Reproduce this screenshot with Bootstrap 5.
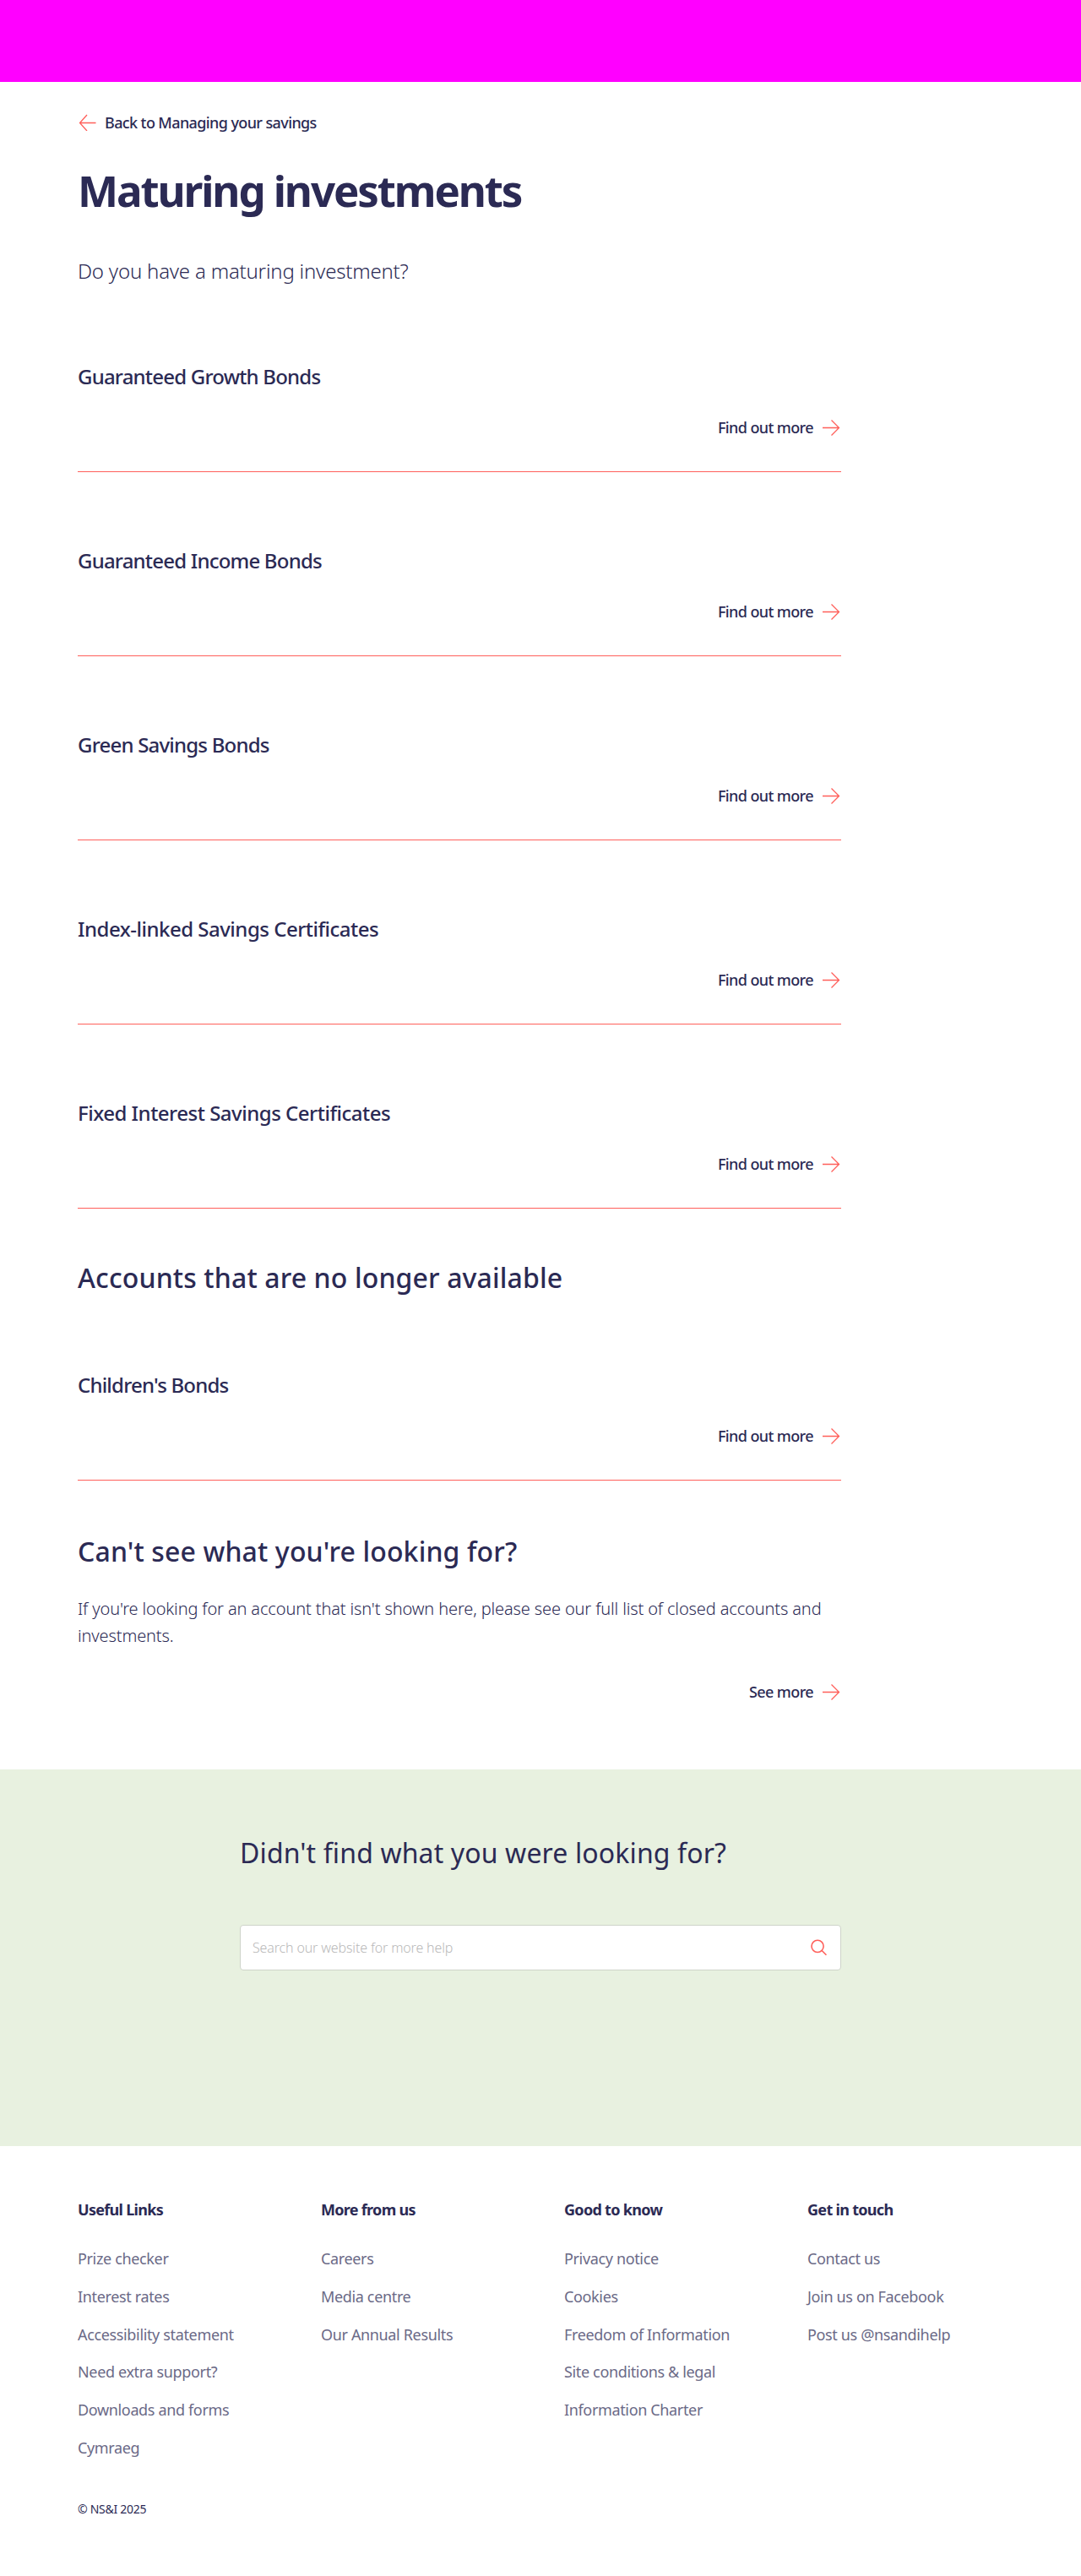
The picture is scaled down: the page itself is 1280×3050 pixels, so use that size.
<!DOCTYPE html>
<html lang="en">
<head>
<meta charset="utf-8">
<meta name="viewport" content="width=device-width, initial-scale=1">
<title>Maturing investments | NS&amp;I</title>
<link href="https://cdn.jsdelivr.net/npm/bootstrap@5.3.0/dist/css/bootstrap.min.css" rel="stylesheet">
<style>
  :root { --navy: #2b2a54; --coral: #ff5f5a; --sage: #e8f1e0; }
  body { font-family: "Noto Sans", "Open Sans", sans-serif; color: var(--navy); background: #fff; }
  a { color: inherit; text-decoration: none; }
  .top-banner { height: 97px; background: #f0f; }
  .page-wrap { width: 1152px; margin-left: 80px; padding: 0 12px; }
  .main-col { width: 904px; }
  .arrow-link { font-size: 18px; line-height: 24px; font-weight: 500; letter-spacing: -.61px; }
  .arrow-link svg { fill: none; stroke: var(--coral); stroke-width: 1.3; flex: none; margin-left: 11px; }
  .back-link { margin-top: 36px; }
  .back-link svg { margin: 0 10px 0 0; }
  .page-title { font-size: 51px; line-height: 64px; font-weight: 700; letter-spacing: -2.1px; margin: 36px 0 48px; }
  .intro { font-size: 24px; line-height: 32px; font-weight: 300; letter-spacing: -.2px; margin-bottom: 4px; }
  .product { padding: 89px 0 40px; border-bottom: 1px solid var(--coral); }
  .product h3 { font-size: 24px; line-height: 32px; font-weight: 500; letter-spacing: -.8px; margin: 0 0 32px; }
  .product.certificates h3 { letter-spacing: -.5px; }
  .section-title { font-size: 32px; line-height: 40px; font-weight: 500; letter-spacing: .13px; }
  .closed-title { margin: 62px 0 2px; }
  .more-title { margin: 64px 0 32px; }
  .more-text { font-size: 20px; line-height: 32px; font-weight: 300; letter-spacing: -.13px; margin-bottom: 38px; }
  .help-band { height: 446px; margin-top: 80px; padding-top: 79px; background: var(--sage); }
  .help-inner { width: 712px; }
  .help-inner .section-title { font-weight: 400; margin-bottom: 65px; }
  .search-box { height: 54px; background: #fff; border: 1px solid #ced4c9; border-radius: 4px; padding: 0 16px 0 14px; }
  .search-box input { font-size: 16px; font-weight: 300; letter-spacing: -.15px; }
  .search-box input::placeholder { color: #b9b9b9; opacity: 1; }
  .search-box svg { fill: none; stroke: var(--coral); stroke-width: 1.6; }
  footer { padding-top: 63px; }
  footer h4 { font-size: 18px; line-height: 24px; font-weight: 700; letter-spacing: -.7px; margin: 0 0 34px; }
  footer li { font-size: 18px; line-height: 24px; letter-spacing: -.35px; color: #6b6a87; margin-bottom: 20.8px; }
  .copyright { font-size: 14px; line-height: 20px; letter-spacing: -.28px; margin: 30px 0 0; }
</style>
<script src="https://cdn.jsdelivr.net/npm/bootstrap@5.3.0/dist/js/bootstrap.bundle.min.js"></script>
</head>
<body class="overflow-x-hidden">
<svg class="d-none">
  <symbol id="arrow" viewBox="0 0 22 20"><path d="M0 10.5H19.5M10.5 1.5L19.5 10.5L10.5 19.5"/></symbol>
</svg>
<header class="top-banner"></header>
<main>
  <div class="page-wrap">
    <div class="main-col d-flex flex-column">
      <a href="#" class="arrow-link back-link d-flex align-items-center align-self-start">
        <svg width="22" height="20" viewBox="0 0 22 20"><path d="M21.5 10.5H2.5M11 1L2.5 10.5L11 20"/></svg>Back to Managing your savings
      </a>
      <h1 class="page-title">Maturing investments</h1>
      <p class="intro">Do you have a maturing investment?</p>

      <section class="product"><h3>Guaranteed Growth Bonds</h3><a href="#" class="arrow-link d-flex justify-content-end align-items-center">Find out more<svg width="22" height="20"><use href="#arrow"/></svg></a></section>
      <section class="product"><h3>Guaranteed Income Bonds</h3><a href="#" class="arrow-link d-flex justify-content-end align-items-center">Find out more<svg width="22" height="20"><use href="#arrow"/></svg></a></section>
      <section class="product"><h3>Green Savings Bonds</h3><a href="#" class="arrow-link d-flex justify-content-end align-items-center">Find out more<svg width="22" height="20"><use href="#arrow"/></svg></a></section>
      <section class="product certificates"><h3>Index-linked Savings Certificates</h3><a href="#" class="arrow-link d-flex justify-content-end align-items-center">Find out more<svg width="22" height="20"><use href="#arrow"/></svg></a></section>
      <section class="product certificates"><h3>Fixed Interest Savings Certificates</h3><a href="#" class="arrow-link d-flex justify-content-end align-items-center">Find out more<svg width="22" height="20"><use href="#arrow"/></svg></a></section>

      <h2 class="section-title closed-title">Accounts that are no longer available</h2>
      <section class="product"><h3>Children's Bonds</h3><a href="#" class="arrow-link d-flex justify-content-end align-items-center">Find out more<svg width="22" height="20"><use href="#arrow"/></svg></a></section>

      <h2 class="section-title more-title">Can't see what you're looking for?</h2>
      <p class="more-text">If you're looking for an account that isn't shown here, please see our full list of closed accounts and investments.</p>
      <a href="#" class="arrow-link d-flex justify-content-end align-items-center">See more<svg width="22" height="20"><use href="#arrow"/></svg></a>
    </div>
  </div>

  <section class="help-band">
    <div class="help-inner mx-auto">
      <h2 class="section-title">Didn't find what you were looking for?</h2>
      <form class="search-box d-flex align-items-center">
        <input type="text" class="form-control border-0 shadow-none p-0 bg-transparent" placeholder="Search our website for more help" aria-label="Search">
        <svg width="20" height="20" viewBox="0 0 20 20"><circle cx="8.3" cy="8.3" r="7.3"/><path d="M13.3 13.3L19 19"/></svg>
      </form>
    </div>
  </section>
</main>

<footer>
  <div class="page-wrap">
    <div class="row">
      <div class="col-3"><h4>Useful Links</h4>
        <ul class="list-unstyled mb-0"><li><a href="#">Prize checker</a></li><li><a href="#">Interest rates</a></li><li><a href="#">Accessibility statement</a></li><li><a href="#">Need extra support?</a></li><li><a href="#">Downloads and forms</a></li><li><a href="#">Cymraeg</a></li></ul></div>
      <div class="col-3"><h4>More from us</h4>
        <ul class="list-unstyled mb-0"><li><a href="#">Careers</a></li><li><a href="#">Media centre</a></li><li><a href="#">Our Annual Results</a></li></ul></div>
      <div class="col-3"><h4>Good to know</h4>
        <ul class="list-unstyled mb-0"><li><a href="#">Privacy notice</a></li><li><a href="#">Cookies</a></li><li><a href="#">Freedom of Information</a></li><li><a href="#">Site conditions &amp; legal</a></li><li><a href="#">Information Charter</a></li></ul></div>
      <div class="col-3"><h4>Get in touch</h4>
        <ul class="list-unstyled mb-0"><li><a href="#">Contact us</a></li><li><a href="#">Join us on Facebook</a></li><li><a href="#">Post us @nsandihelp</a></li></ul></div>
    </div>
    <p class="copyright">© NS&amp;I 2025</p>
  </div>
</footer>
</body>
</html>
